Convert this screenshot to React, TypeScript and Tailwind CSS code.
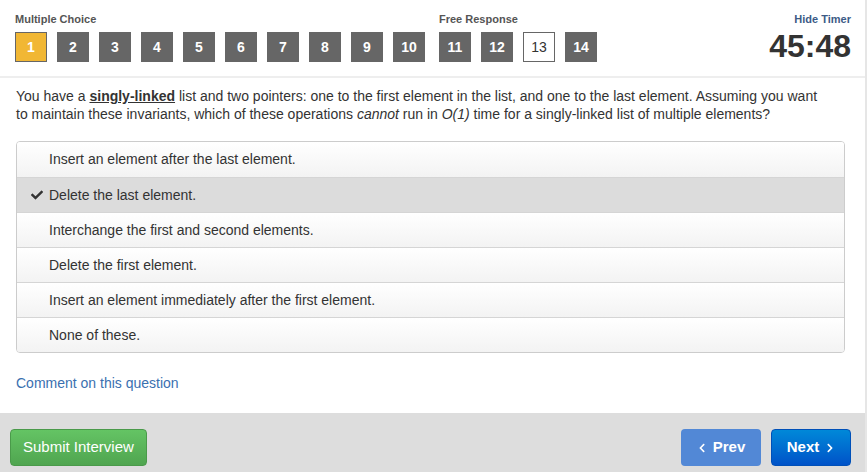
import React from 'react';
import { FaCheck, FaChevronLeft, FaChevronRight } from 'react-icons/fa';

const mcNumbers = [1, 2, 3, 4, 5, 6, 7, 8, 9, 10];
const frNumbers = [11, 12, 13, 14];

const options = [
  'Insert an element after the last element.',
  'Delete the last element.',
  'Interchange the first and second elements.',
  'Delete the first element.',
  'Insert an element immediately after the first element.',
  'None of these.',
];

const QBox: React.FC<{ n: number; current?: boolean; open?: boolean }> = ({ n, current, open }) => {
  if (current) {
    return (
      <div className="w-8 h-[30px] flex items-center justify-center bg-[#f1b734] border border-[#666] text-white font-bold text-[14px]">
        {n}
      </div>
    );
  }
  if (open) {
    return (
      <div className="w-8 h-[30px] flex items-center justify-center bg-white border border-[#666] text-[#333] text-[14px]">
        {n}
      </div>
    );
  }
  return (
    <div className="w-8 h-[30px] flex items-center justify-center bg-[#666] text-white font-bold text-[14px]">
      {n}
    </div>
  );
};

export default function App() {
  const selected = 1;
  return (
    <div
      className="w-[867px] h-[472px] flex flex-col bg-white border-r-2 border-[#e6e6e6] text-[#333] overflow-hidden"
      style={{ fontFamily: '"Liberation Sans", Arial, sans-serif' }}
    >
      {/* header */}
      <div className="h-[78px] shrink-0 flex items-start justify-between pl-[15px] pr-[14px] border-b-2 border-[#eee]">
        <div className="flex gap-[14px] pt-[12px]">
          <div>
            <div className="text-[11px] font-bold text-[#555] leading-[14px] mb-[6px]">Multiple Choice</div>
            <div className="flex gap-[10px]">
              {mcNumbers.map((n) => (
                <QBox key={n} n={n} current={n === 1} />
              ))}
            </div>
          </div>
          <div>
            <div className="text-[11px] font-bold text-[#555] leading-[14px] mb-[6px]">Free Response</div>
            <div className="flex gap-[10px]">
              {frNumbers.map((n) => (
                <QBox key={n} n={n} open={n === 13} />
              ))}
            </div>
          </div>
        </div>
        <div className="flex flex-col items-end pt-[12px]">
          <div className="text-[11px] font-bold text-[#3d5b86] leading-[14px]">Hide Timer</div>
          <div className="text-[32px] font-bold text-[#333] leading-[38px] mt-[1px]">45:48</div>
        </div>
      </div>

      {/* question */}
      <div className="flex-1 pl-4 pr-5 pt-[9px]">
        <p className="max-w-[806px] text-[14px] leading-[18px] text-[#333]">
          You have a <span className="font-bold underline">singly-linked</span> list and two pointers: one to the first
          element in the list, and one to the last element. Assuming you want to maintain these invariants, which of
          these operations <em>cannot</em> run in <em>O(1)</em> time for a singly-linked list of multiple elements?
        </p>

        <div className="mt-[18px] border border-[#ccc] rounded-[4px] overflow-hidden">
          {options.map((opt, i) => (
            <div
              key={i}
              className={
                'h-[35px] flex items-center text-[14px] text-[#333] ' +
                (i > 0 ? 'border-t border-[#d5d5d5] ' : '') +
                (i === selected ? 'bg-[#dcdcdc]' : 'bg-gradient-to-b from-white to-[#f3f3f3]')
              }
            >
              <div className="w-8 flex justify-end pr-[6px]">
                {i === selected && <FaCheck className="text-[#333] w-[12px] h-[12px]" />}
              </div>
              <span>{opt}</span>
            </div>
          ))}
        </div>

        <div className="mt-[21px] text-[14px] leading-[18px] text-[#3a70b0]">Comment on this question</div>
      </div>

      {/* footer */}
      <div className="h-[59px] shrink-0 bg-[#dddddd] flex items-start justify-between pl-[10px] pr-[14px] pt-[16px]">
        <button className="h-[37px] px-[12px] rounded-[4px] border border-[#4a9a4a] bg-gradient-to-b from-[#64c464] to-[#50a550] text-white text-[15px]">
          Submit Interview
        </button>
        <div className="flex gap-[10px]">
          <button className="w-20 h-[37px] rounded-[4px] bg-[#5288d6] text-white text-[15px] font-bold flex items-center justify-center gap-[6px]">
            <FaChevronLeft className="w-[10px] h-[10px]" />
            Prev
          </button>
          <button className="w-20 h-[37px] rounded-[4px] border border-[#0050b8] bg-gradient-to-b from-[#0088d8] to-[#0052c8] text-white text-[15px] font-bold flex items-center justify-center gap-[6px]">
            Next
            <FaChevronRight className="w-[10px] h-[10px]" />
          </button>
        </div>
      </div>
    </div>
  );
}
